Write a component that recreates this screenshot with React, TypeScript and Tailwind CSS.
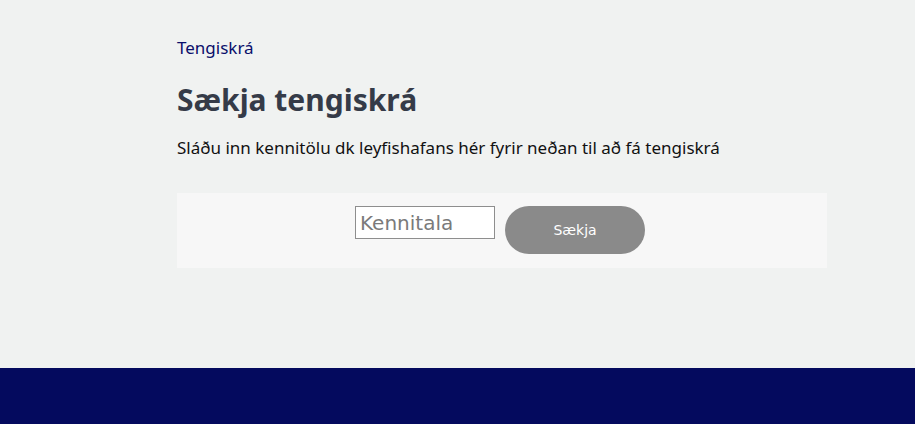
export default function App() {
    return (
        <div className="min-h-[424px] flex flex-col bg-[#f0f2f1]" style={{ fontFamily: '"Noto Sans", "DejaVu Sans", sans-serif' }}>
            <main className="h-[368px] pl-[177px] pt-[36px]">
                <div className="w-[650px]">
                    <a className="block text-[17px] leading-[24px] text-[#0a0f6b]">Tengiskrá</a>
                    <h1 className="mt-[20px] text-[30px] leading-[40px] font-bold text-[#353b48]">Sækja tengiskrá</h1>
                    <p className="mt-[16px] text-[17px] leading-[24px] text-[#111]">
                        Sláðu inn kennitölu dk leyfishafans hér fyrir neðan til að fá tengiskrá
                    </p>
                    <div className="mt-[33px] h-[75px] bg-[#f7f7f7] flex justify-center items-start pt-[13px] pr-[4px] gap-[10px]">
                        <input
                            placeholder="Kennitala"
                            className="w-[140px] h-[33px] border border-[#8e8e8e] bg-white px-1 text-[20px] placeholder:text-[#7a7a7a] outline-none"
                            style={{ fontFamily: '"DejaVu Sans", Verdana, sans-serif' }}
                        />
                        <button
                            className="w-[140px] h-[48px] rounded-full bg-[#8a8a8a] text-white text-[14px]"
                            style={{ fontFamily: '"DejaVu Sans", Verdana, sans-serif' }}
                        >
                            Sækja
                        </button>
                    </div>
                </div>
            </main>
            <footer className="flex-1 h-[56px] bg-[#040a5e]" />
        </div>
    );
}
